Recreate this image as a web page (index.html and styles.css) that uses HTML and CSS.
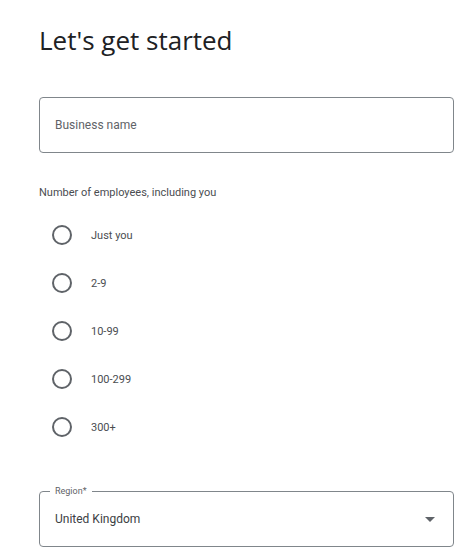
FILE: index.html
```html
<!DOCTYPE html>
<html>
<head>
<meta charset="utf-8">
<link rel="stylesheet" href="styles.css">
</head>
<body>
<main class="page">
  <h1 class="title">Let's get started</h1>
  <div class="field">
    <span class="placeholder">Business name</span>
  </div>
  <p class="question">Number of employees, including you</p>
  <ul class="radios">
    <li class="radio"><span class="circle"></span><span class="label">Just you</span></li>
    <li class="radio"><span class="circle"></span><span class="label">2-9</span></li>
    <li class="radio"><span class="circle"></span><span class="label">10-99</span></li>
    <li class="radio"><span class="circle"></span><span class="label">100-299</span></li>
    <li class="radio"><span class="circle"></span><span class="label">300+</span></li>
  </ul>
  <div class="field select">
    <span class="legend">Region*</span>
    <span class="value">United Kingdom</span>
    <svg class="arrow" width="10" height="5" viewBox="0 0 10 5"><path d="M0 0L5 5L10 0Z" fill="#5f6368"/></svg>
  </div>
</main>
</body>
</html>
```
FILE: styles.css
```css
html, body { margin: 0; padding: 0; background: #fff; }
body { font-family: Roboto, "Liberation Sans", sans-serif; color: #3c4043; }
.page { width: 415px; padding: 0 0 0 39px; }
.title {
  margin: 0;
  padding-top: 22px;
  font-family: "Open Sans", Roboto, sans-serif;
  font-weight: 400;
  font-size: 26px;
  line-height: 36px;
  color: #202124;
}
.field {
  box-sizing: border-box;
  height: 56px;
  margin-top: 39px;
  border: 1px solid #80868b;
  border-radius: 4px;
  display: flex;
  align-items: center;
  padding: 0 15px;
  position: relative;
}
.placeholder { font-size: 12px; color: #5f6368; }
.question { margin: 32px 0 0; font-size: 11px; line-height: 16px; color: #4a4d51; }
.radios { list-style: none; margin: 10px 0 0; padding: 0 0 0 13px; }
.radio { height: 48px; display: flex; align-items: center; }
.circle {
  box-sizing: border-box;
  width: 20px; height: 20px;
  border: 2px solid #5f6368;
  border-radius: 50%;
  flex: none;
}
.label { margin-left: 19px; font-size: 11px; color: #4a4d51; }
.select { margin-top: 40px; justify-content: space-between; padding-right: 18px; }
.legend {
  position: absolute;
  left: 10px; top: -7px;
  padding: 0 5px;
  background: #fff;
  font-size: 9px; line-height: 12px;
  color: #5f6368;
}
.value { font-size: 12px; color: #3c4043; }
.arrow { display: block; }
```
